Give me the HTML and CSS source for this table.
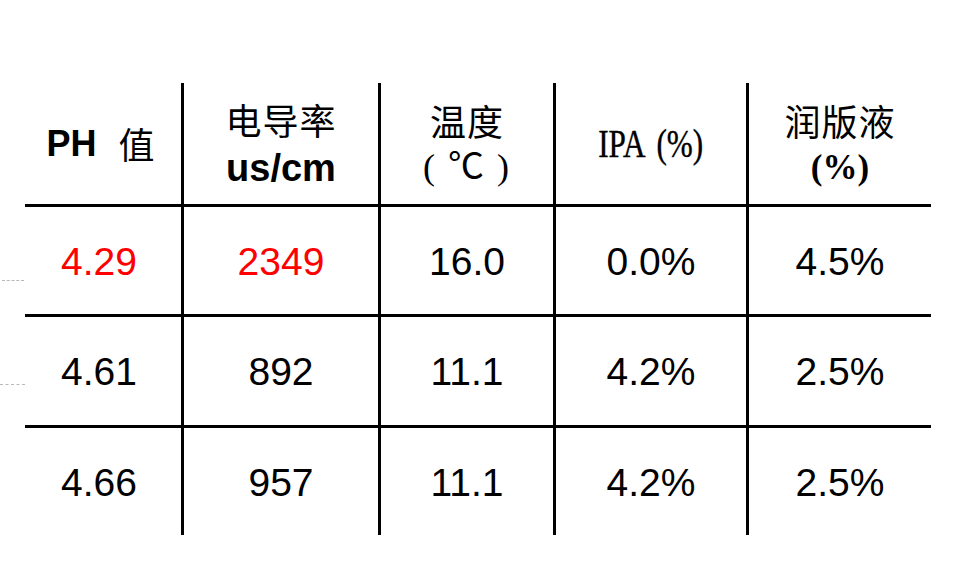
FILE: index.html
```html
<!DOCTYPE html>
<html lang="zh-CN">
<head>
<meta charset="utf-8">
<title>润版液参数</title>
<link rel="stylesheet" href="styles.css">
</head>
<body>
<div class="page">
  <div class="marks">
    <span class="dots dots-a"></span>
    <span class="dots dots-b"></span>
  </div>
  <div class="table">
    <div class="cell head first"><span class="lat-b">PH</span><span class="cjk gap">值</span></div>
    <div class="cell head col"><span class="cjk">电导率</span><span class="lat-b unit">us/cm</span></div>
    <div class="cell head col"><span class="cjk">温度</span><span class="serif deg">( ℃ )</span></div>
    <div class="cell head col"><span class="serif ipa">IPA (%)</span></div>
    <div class="cell head col"><span class="cjk">润版液</span><span class="serif-b pct">(%)</span></div>

    <div class="cell row first red">4.29</div>
    <div class="cell row col red">2349</div>
    <div class="cell row col">16.0</div>
    <div class="cell row col">0.0%</div>
    <div class="cell row col">4.5%</div>

    <div class="cell row first">4.61</div>
    <div class="cell row col">892</div>
    <div class="cell row col">11.1</div>
    <div class="cell row col">4.2%</div>
    <div class="cell row col">2.5%</div>

    <div class="cell row first">4.66</div>
    <div class="cell row col">957</div>
    <div class="cell row col">11.1</div>
    <div class="cell row col">4.2%</div>
    <div class="cell row col">2.5%</div>
  </div>
</div>
</body>
</html>
```

FILE: styles.css
```css
html, body {
  margin: 0;
  padding: 0;
  background: #ffffff;
}

body {
  width: 955px;
  height: 586px;
  overflow: hidden;
  font-family: "Liberation Sans", Arial, "Noto Sans CJK SC", sans-serif;
  color: #000;
}

.page {
  display: flex;
  padding-top: 83px;
}

.marks {
  width: 25px;
  position: relative;
}

.dots {
  position: absolute;
  height: 0;
  border-top: 1px dashed #b8b8b8;
}

.dots-a {
  top: 197px;
  left: 2px;
  width: 22px;
}

.dots-b {
  top: 301px;
  left: 0;
  width: 25px;
}

.table {
  display: grid;
  grid-template-columns: 156px 197px 175px 193px 185px;
  grid-template-rows: 121px 110px 111px 110px;
}

.cell {
  box-sizing: border-box;
  display: flex;
  align-items: center;
  justify-content: center;
  text-align: center;
}

.col {
  border-left: 3px solid #000;
}

.row {
  border-top: 3px solid #000;
  font-size: 39px;
  padding-top: 2px;
}

.row.first {
  padding-right: 8px;
}

.red {
  color: #ff0000;
}

.head {
  flex-direction: column;
  line-height: 47px;
}

.head.first {
  flex-direction: row;
  padding-right: 4px;
}

.cjk {
  font-family: "Noto Sans CJK SC", "Noto Sans CJK TC", sans-serif;
  font-size: 36px;
  font-weight: 400;
  letter-spacing: 1px;
}

.gap {
  margin-left: 22px;
}

.lat-b {
  font-family: "Liberation Sans", Arial, sans-serif;
  font-weight: 700;
  font-size: 36px;
}

.unit {
  font-size: 38px;
  padding-top: 2px;
}

.serif {
  font-family: "Liberation Serif", "Times New Roman", "Noto Sans CJK SC", serif;
  font-size: 36px;
}

.deg {
  white-space: pre;
  letter-spacing: 2px;
}

.ipa {
  display: inline-block;
  font-size: 39px;
  transform: scaleX(0.8);
  word-spacing: 6px;
  -webkit-text-stroke: 0.4px #000;
}

.serif-b {
  font-family: "Liberation Serif", "Times New Roman", serif;
  font-weight: 700;
  font-size: 35px;
}
```
